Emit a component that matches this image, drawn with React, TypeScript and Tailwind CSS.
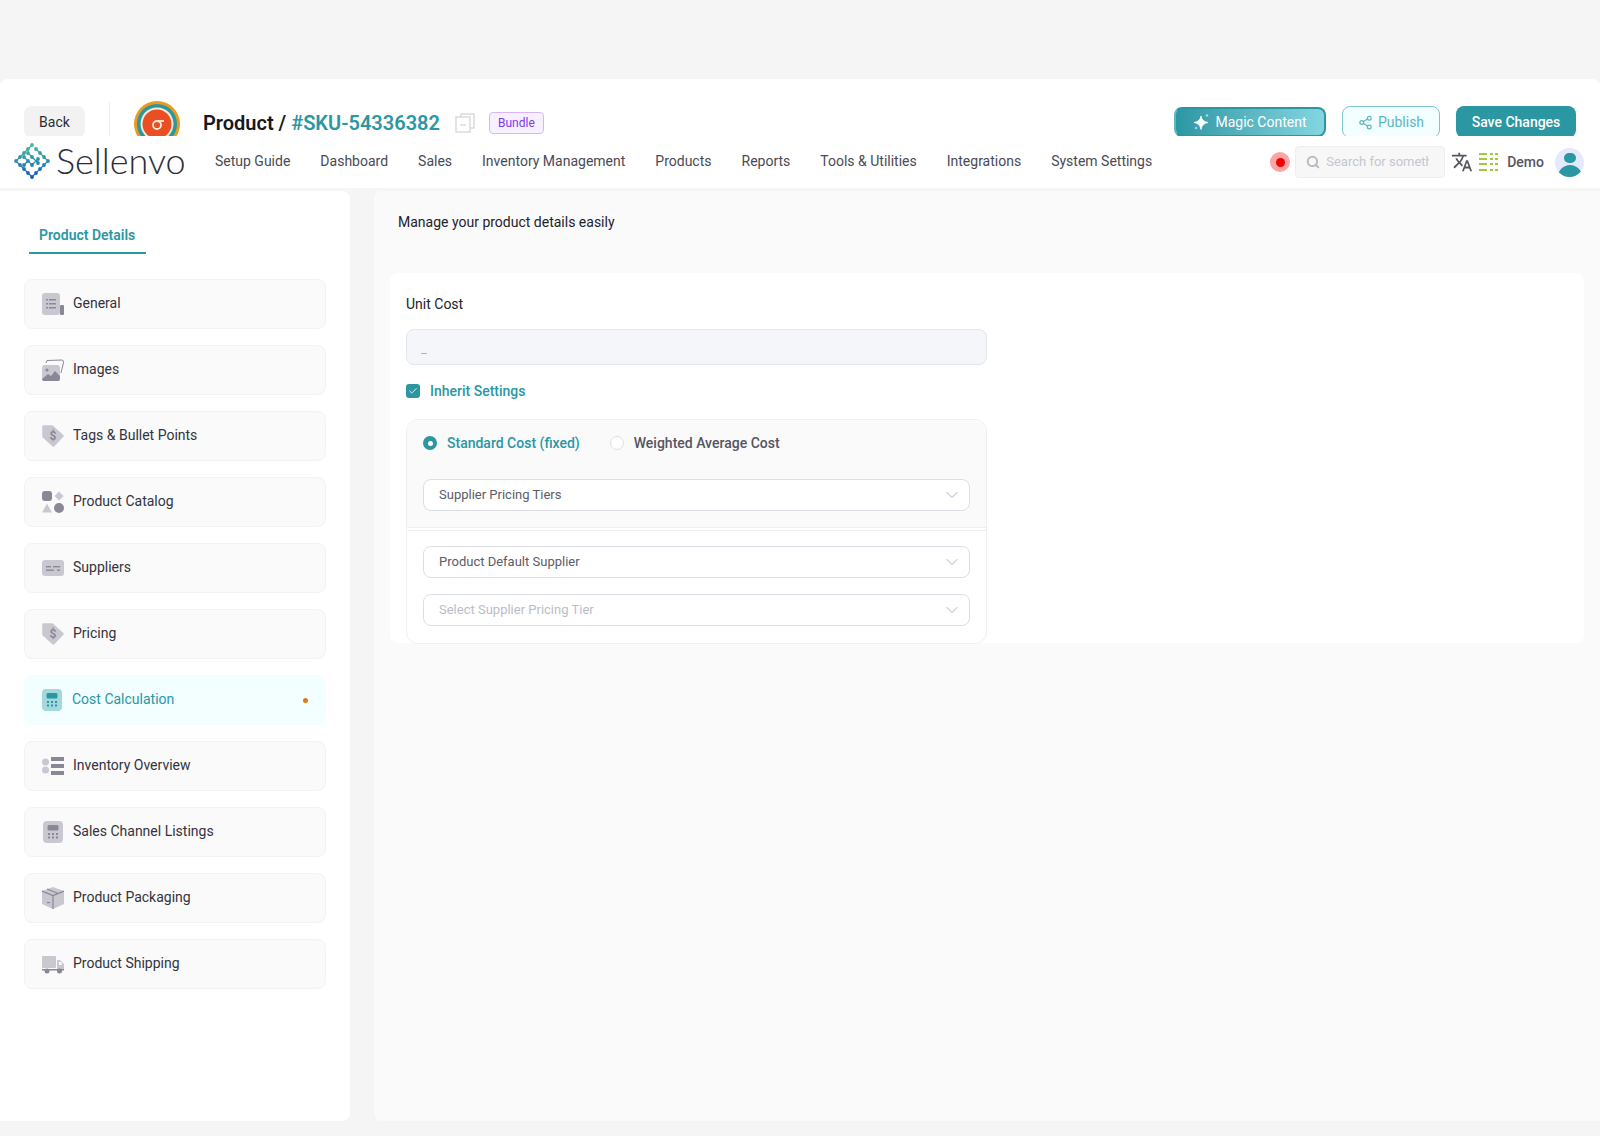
import { Search, Share2, ChevronDown, Check } from 'lucide-react';
import { MdTranslate } from 'react-icons/md';

const DARK = '#8a8797';
const LIGHT = '#c9c8d1';

function GeneralIcon() {
  return (
    <svg width="22" height="22" viewBox="0 0 22 22">
      <rect x="0" y="0" width="18" height="22" rx="3" fill={LIGHT} />
      <rect x="18" y="12" width="4" height="10" rx="1" fill={DARK} />
      <g fill={DARK}>
        <rect x="4" y="6" width="2" height="1.5" />
        <rect x="7" y="6" width="7" height="1.5" />
        <rect x="4" y="10" width="2" height="1.5" />
        <rect x="7" y="10" width="7" height="1.5" />
        <rect x="4" y="14" width="2" height="1.5" />
        <rect x="7" y="14" width="7" height="1.5" />
      </g>
    </svg>
  );
}

function ImagesIcon() {
  return (
    <svg width="22" height="22" viewBox="0 0 22 22">
      <path d="M4 4 L5 1.5 L20 1 Q22 1.5 21.5 3.5 L19 14" fill="none" stroke={DARK} strokeWidth="1" />
      <rect x="0" y="6" width="18" height="16" rx="3" fill={LIGHT} />
      <circle cx="5" cy="11" r="1.6" fill={DARK} />
      <path d="M0 20 L6 15 L9 17 L13 12 L18 17 V20 Q18 22 16 22 H2 Q0 22 0 20Z" fill={DARK} />
    </svg>
  );
}

function TagIcon() {
  return (
    <svg width="22" height="22" viewBox="0 0 22 22">
      <path d="M1.5 1.5 H10 L20.5 11 L11.5 20.5 L1.5 11.5Z" fill={LIGHT} stroke={LIGHT} strokeWidth="2.5" strokeLinejoin="round" />
      <text x="11" y="15" textAnchor="middle" fontSize="12" fontWeight="700" fill={DARK} fontFamily="Roboto, sans-serif">$</text>
    </svg>
  );
}

function CatalogIcon() {
  return (
    <svg width="22" height="22" viewBox="0 0 22 22">
      <rect x="0" y="0" width="10" height="10" rx="3" fill={DARK} />
      <path d="M17 0.5 L21.5 5 L17 9.5 L12.5 5Z" fill={LIGHT} />
      <path d="M5 12.5 L10 21.5 H0Z" fill={LIGHT} />
      <circle cx="17" cy="17" r="5" fill={DARK} />
    </svg>
  );
}

function SuppliersIcon() {
  return (
    <svg width="22" height="22" viewBox="0 0 22 22">
      <rect x="0" y="3" width="22" height="16" rx="3" fill={LIGHT} />
      <g fill={DARK}>
        <rect x="4" y="9" width="5" height="1.4" />
        <rect x="11" y="9" width="7" height="1.4" />
        <rect x="4" y="12.5" width="8" height="1.4" />
        <rect x="15" y="12.5" width="3" height="1.4" />
      </g>
    </svg>
  );
}

function CalcIcon({ light, dark, width = 20 }: { light: string; dark: string; width?: number }) {
  return (
    <svg width={width} height="22" viewBox="0 0 20 22">
      <rect x="0" y="0" width="20" height="22" rx="4" fill={light} />
      <rect x="4.5" y="4" width="11" height="5.5" rx="1.5" fill={dark} />
      <g fill={dark}>
        <rect x="5" y="12" width="2" height="2" />
        <rect x="9" y="12" width="2" height="2" />
        <rect x="13" y="12" width="2" height="2" />
        <rect x="5" y="15.5" width="2" height="2" />
        <rect x="9" y="15.5" width="2" height="2" />
        <rect x="13" y="15.5" width="2" height="2" />
      </g>
    </svg>
  );
}

function OverviewIcon() {
  return (
    <svg width="22" height="22" viewBox="0 0 22 22">
      <circle cx="3.5" cy="7" r="3.5" fill={LIGHT} />
      <circle cx="3.5" cy="15" r="3.5" fill={LIGHT} />
      <rect x="9" y="2" width="13" height="4" fill={DARK} />
      <rect x="9" y="9" width="13" height="4" fill={DARK} />
      <rect x="9" y="16" width="13" height="4" fill={DARK} />
    </svg>
  );
}

function BoxIcon() {
  return (
    <svg width="22" height="22" viewBox="0 0 22 22">
      <path d="M11 0 L22 4 V17 L11 22 L0 17 V4Z" fill={LIGHT} />
      <path d="M0 4 L11 8.5 L22 4 M11 8.5 V22 M5 2 L16 6.5" fill="none" stroke={DARK} strokeWidth="1.2" />
      <rect x="5" y="15" width="3" height="1.2" fill={DARK} />
    </svg>
  );
}

function TruckIcon() {
  return (
    <svg width="22" height="22" viewBox="0 0 22 22">
      <rect x="0" y="3" width="14" height="12" rx="1" fill={LIGHT} />
      <path d="M15 7 H18 L22 11 V17 H15Z" fill={LIGHT} />
      <rect x="17" y="9" width="2.5" height="3" fill="#fff" />
      <rect x="0" y="16" width="22" height="1.5" fill={DARK} />
      <circle cx="5" cy="18" r="2.5" fill={DARK} />
      <circle cx="17.5" cy="18" r="2.5" fill={DARK} />
    </svg>
  );
}

function Logo() {
  // chains of dots with thin links, green at the top going blue at the bottom
  const chains = [
    'M18 2 L2 18',
    'M22 6 L34 18 L18 34 L2 18',
    'M14 10 L24 20',
    'M10 14 L18 22 L24 16',
    'M10 22 L14 18',
  ];
  const dots: [number, number][] = [
    [18, 2], [14, 6], [10, 10], [6, 14], [2, 18], [22, 6], [26, 10], [30, 14], [34, 18],
    [6, 22], [10, 26], [14, 30], [18, 34], [22, 30], [26, 26], [30, 22],
    [14, 10], [18, 14], [24, 20], [10, 14], [14, 18], [18, 22], [24, 16], [10, 22],
  ];
  return (
    <svg width="36" height="36" viewBox="0 0 36 36" className="shrink-0">
      <defs>
        <linearGradient id="logoGrad" gradientUnits="userSpaceOnUse" x1="0" y1="2" x2="0" y2="34">
          <stop offset="0" stopColor="#45b89a" />
          <stop offset="0.5" stopColor="#2a8fb0" />
          <stop offset="1" stopColor="#1158c8" />
        </linearGradient>
      </defs>
      <g fill="none" stroke="url(#logoGrad)" strokeWidth="1.2">
        {chains.map((d) => (
          <path key={d} d={d} />
        ))}
      </g>
      <g fill="url(#logoGrad)">
        {dots.map(([x, y], i) => (
          <circle key={i} cx={x} cy={y} r="1.9" />
        ))}
      </g>
    </svg>
  );
}

function Brand() {
  return (
    <svg width="46" height="46" viewBox="0 0 46 46" className="shrink-0">
      <circle cx="23" cy="23" r="23" fill="#ea9a1e" />
      <circle cx="23" cy="23" r="20" fill="#2a97a3" />
      <circle cx="23" cy="23" r="16.5" fill="#f4ecd8" />
      <circle cx="23" cy="23" r="14.5" fill="#e94f22" />
      <circle cx="23" cy="24" r="4" fill="none" stroke="#f4ecd8" strokeWidth="1.8" />
      <path d="M22 20 H30" stroke="#f4ecd8" strokeWidth="1.8" />
    </svg>
  );
}

const navItems = ['Setup Guide', 'Dashboard', 'Sales', 'Inventory Management', 'Products', 'Reports', 'Tools & Utilities', 'Integrations', 'System Settings'];

const sideItems = [
  { label: 'General', icon: <GeneralIcon /> },
  { label: 'Images', icon: <ImagesIcon /> },
  { label: 'Tags & Bullet Points', icon: <TagIcon /> },
  { label: 'Product Catalog', icon: <CatalogIcon /> },
  { label: 'Suppliers', icon: <SuppliersIcon /> },
  { label: 'Pricing', icon: <TagIcon /> },
  { label: 'Cost Calculation', icon: <CalcIcon light="#a5d8dd" dark="#2a97a3" />, active: true },
  { label: 'Inventory Overview', icon: <OverviewIcon /> },
  { label: 'Sales Channel Listings', icon: <span className="pl-px"><CalcIcon light={LIGHT} dark={DARK} /></span> },
  { label: 'Product Packaging', icon: <BoxIcon /> },
  { label: 'Product Shipping', icon: <TruckIcon /> },
];

function SelectBox({ label, muted }: { label: string; muted?: boolean }) {
  return (
    <div className="h-[32px] flex items-center justify-between rounded-lg border border-[#dcdde6] bg-white pl-[15px] pr-[7px]">
      <span className={`text-[13px] ${muted ? 'text-[#bcbdc8]' : 'text-[#5c5c66]'}`}>{label}</span>
      <ChevronDown size={20} strokeWidth={1} className="text-[#a0a1ac]" />
    </div>
  );
}

export default function App() {
  return (
    <div className="w-[1600px] h-[1136px] overflow-hidden bg-[#f5f5f5] pt-[79px] font-['Roboto',sans-serif]">
      <div className="bg-white rounded-t-lg">
        <div className="h-[57px] overflow-hidden flex pl-[24px] pr-[24px]">
          <button className="mt-[27px] w-[61px] h-[32px] rounded-lg bg-[#f2f2f2] text-sm text-[#2c2c34] shrink-0">Back</button>
          <div className="ml-[24px] mt-[23px] w-px h-[40px] bg-[#eeeeee]" />
          <div className="ml-[24px] mt-[22px]"><Brand /></div>
          <div className="ml-[23px] mt-[31px] h-[26px] flex items-center">
            <span className="text-[20px] font-semibold text-[#17171f] leading-none">
              Product / <span className="text-[#2a97a3]">#SKU-54336382</span>
            </span>
            <svg width="20" height="20" viewBox="0 0 20 20" className="ml-[15px]" fill="none" stroke="#dcdcdc" strokeWidth="1.5">
              <path d="M6 4 V1 H19 V15 H15" />
              <rect x="1" y="4" width="14" height="15" />
              <path d="M5 12 H11" />
            </svg>
            <span className="ml-[14px] h-[22px] w-[55px] flex items-center justify-center rounded border border-[#d8b4fe] bg-[#f6f0ff] text-xs text-[#7c3aed]">Bundle</span>
          </div>
          <div className="ml-auto flex mt-[27px] gap-[16px]">
            <button className="mt-px w-[152px] h-[30px] flex items-center justify-center gap-[4px] rounded-lg border-2 border-[#2a97a3] border-l-[#5cb8c2] bg-gradient-to-r from-[#2a97a3] to-[#84d6e0] text-sm text-white">
              <svg width="18" height="18" viewBox="0 0 18 18" fill="#fff">
                <path d="M8 3 Q8.6 8.4 15 9.5 Q9 10.6 8 16.5 Q7 10.6 1 9.5 Q7.4 8.4 8 3Z" stroke="#fff" strokeWidth="0.8" strokeLinejoin="round" />
                <path d="M14 1 L15.5 2.5 L14 4 L12.5 2.5Z" opacity="0.6" />
                <path d="M3 13.5 L4.5 15 L3 16.5 L1.5 15Z" opacity="0.6" />
              </svg>
              Magic Content
            </button>
            <button className="w-[98px] h-[32px] flex items-center justify-center gap-[5px] rounded-lg border border-[#7cc6cf] bg-[#f2feff] text-sm text-[#5db6c0]">
              <Share2 size={15} strokeWidth={2} />
              Publish
            </button>
            <button className="w-[120px] h-[32px] rounded-lg bg-[#2a97a3] text-sm font-medium text-white">Save Changes</button>
          </div>
        </div>
        <nav className="h-[52px] flex items-center pl-[14px] pr-[16px]">
          <div className="-mt-[2px] flex items-center w-[201px] shrink-0">
            <Logo />
            <span className="ml-[6px] -mt-[3px] text-[36px] font-['Lato',sans-serif] font-light leading-none text-[#2b2d3a]">Sellenvo</span>
          </div>
          <div className="-mt-[2px] flex gap-[30px] text-sm text-[#4a4a55]">
            {navItems.map((item) => (
              <span key={item}>{item}</span>
            ))}
          </div>
          <div className="ml-auto flex items-center">
            <div className="w-[20px] h-[20px] rounded-full bg-[#fba5a5] flex items-center justify-center">
              <div className="w-[9px] h-[9px] rounded-full bg-[#f50000]" />
            </div>
            <div className="ml-[5px] w-[150px] h-[32px] rounded border border-[#eeeeee] bg-[#f7f7f7] flex items-center pl-[10px] pr-[15px]">
              <Search size={14} strokeWidth={3.5} className="text-[#b9bac4] shrink-0" />
              <span className="ml-[6px] w-[103px] text-[13px] text-[#c5c6cf] whitespace-nowrap overflow-hidden">Search for something</span>
            </div>
            <MdTranslate size={22} className="ml-[6px] text-[#55555f]" />
            <svg width="19" height="20" viewBox="0 0 19 20" className="ml-[6px]" stroke="#7fb800" strokeWidth="1.5" fill="none">
              <path d="M0 2 H8 M0 7 H8 M0 12 H8 M0 18 H8" />
              <path d="M11 2 H19 M11 7 H19 M11 12 H19 M11 18 H19" strokeDasharray="3 2" />
            </svg>
            <span className="ml-[9px] text-sm font-medium text-[#55555f]">Demo</span>
            <div className="ml-[11px] w-[29px] h-[29px] rounded-full bg-[#e4e9fb] overflow-hidden flex flex-col items-center">
              <div className="mt-[5px] w-[12px] h-[12px] rounded-full bg-[#2a97a3]" />
              <div className="mt-[2px] w-[24px] h-[14px] rounded-t-full bg-[#2a97a3]" />
            </div>
          </div>
        </nav>
      </div>

      <div className="mt-[3px] flex gap-[24px]">
        <aside className="w-[350px] h-[930px] shrink-0 rounded-r-lg bg-white pt-[34px] px-[24px]">
          <div className="ml-[5px] w-[117px] h-[29px] border-b-2 border-[#2a97a3] pl-[10px] text-sm font-semibold text-[#2a97a3] leading-[20px]">
            Product Details
          </div>
          <div className="mt-[25px] flex flex-col gap-[16px] w-[302px]">
            {sideItems.map((item) => (
              <div
                key={item.label}
                className={`h-[50px] flex items-center rounded-lg pl-[17px] pr-[17px] border ${
                  item.active ? 'bg-[#f2feff] border-[#f2feff] text-[#2a97a3]' : 'bg-[#fafafa] border-[#f3f3f3] text-[#33333d]'
                }`}
              >
                <span className="w-[22px] h-[22px] flex items-center">{item.icon}</span>
                <span className={`${item.active ? 'ml-[8px]' : 'ml-[9px]'} -mt-[2px] text-sm`}>{item.label}</span>
                {item.active && <span className="ml-auto w-[5px] h-[5px] rounded-full bg-[#e07a10]" />}
              </div>
            ))}
          </div>
        </aside>

        <main className="flex-1 h-[930px] rounded-l-lg bg-[#fafafa] pt-[21px] pl-[16px] pr-[16px]">
          <p className="pl-[8px] text-sm leading-[20px] text-[#22222a]">Manage your product details easily</p>
          <section className="mt-[41px] h-[370px] rounded-lg bg-white pt-[21px] px-[16px]">
            <div className="text-sm leading-[20px] text-[#22222a]">Unit Cost</div>
            <div className="mt-[15px] w-[581px] h-[36px] rounded-lg border border-[#e4e6ee] bg-[#f5f6fa] pl-[14px] text-[13px] leading-[38px] text-[#b0b1bb]">_</div>
            <label className="mt-[16px] flex items-center h-[20px]">
              <span className="w-[14px] h-[14px] rounded-[3px] bg-[#2a97a3] flex items-center justify-center">
                <Check size={10} strokeWidth={2} className="text-white" />
              </span>
              <span className="ml-[10px] text-sm font-medium text-[#2a97a3]">Inherit Settings</span>
            </label>
            <div className="mt-[18px] w-[581px] h-[225px] rounded-xl border border-[#efeff3] overflow-hidden">
              <div className="h-[108px] bg-[#fafafa] border-b border-[#efeff3] pt-[13px] px-[16px]">
                <div className="flex items-center h-[20px] text-sm font-medium">
                  <span className="w-[14px] h-[14px] rounded-full bg-[#2a97a3] flex items-center justify-center">
                    <span className="w-[5px] h-[5px] rounded-full bg-white" />
                  </span>
                  <span className="ml-[10px] text-[#2a97a3]">Standard Cost (fixed)</span>
                  <span className="ml-[30px] w-[14px] h-[14px] rounded-full border border-[#dfe0e6] bg-white" />
                  <span className="ml-[10px] text-[#55555f]">Weighted Average Cost</span>
                </div>
                <div className="mt-[26px]"><SelectBox label="Supplier Pricing Tiers" /></div>
              </div>
              <div className="mt-[2px] border-t border-[#efeff3] pt-[15px] px-[16px] flex flex-col gap-[16px]">
                <SelectBox label="Product Default Supplier" />
                <SelectBox label="Select Supplier Pricing Tier" muted />
              </div>
            </div>
          </section>
        </main>
      </div>
    </div>
  );
}
